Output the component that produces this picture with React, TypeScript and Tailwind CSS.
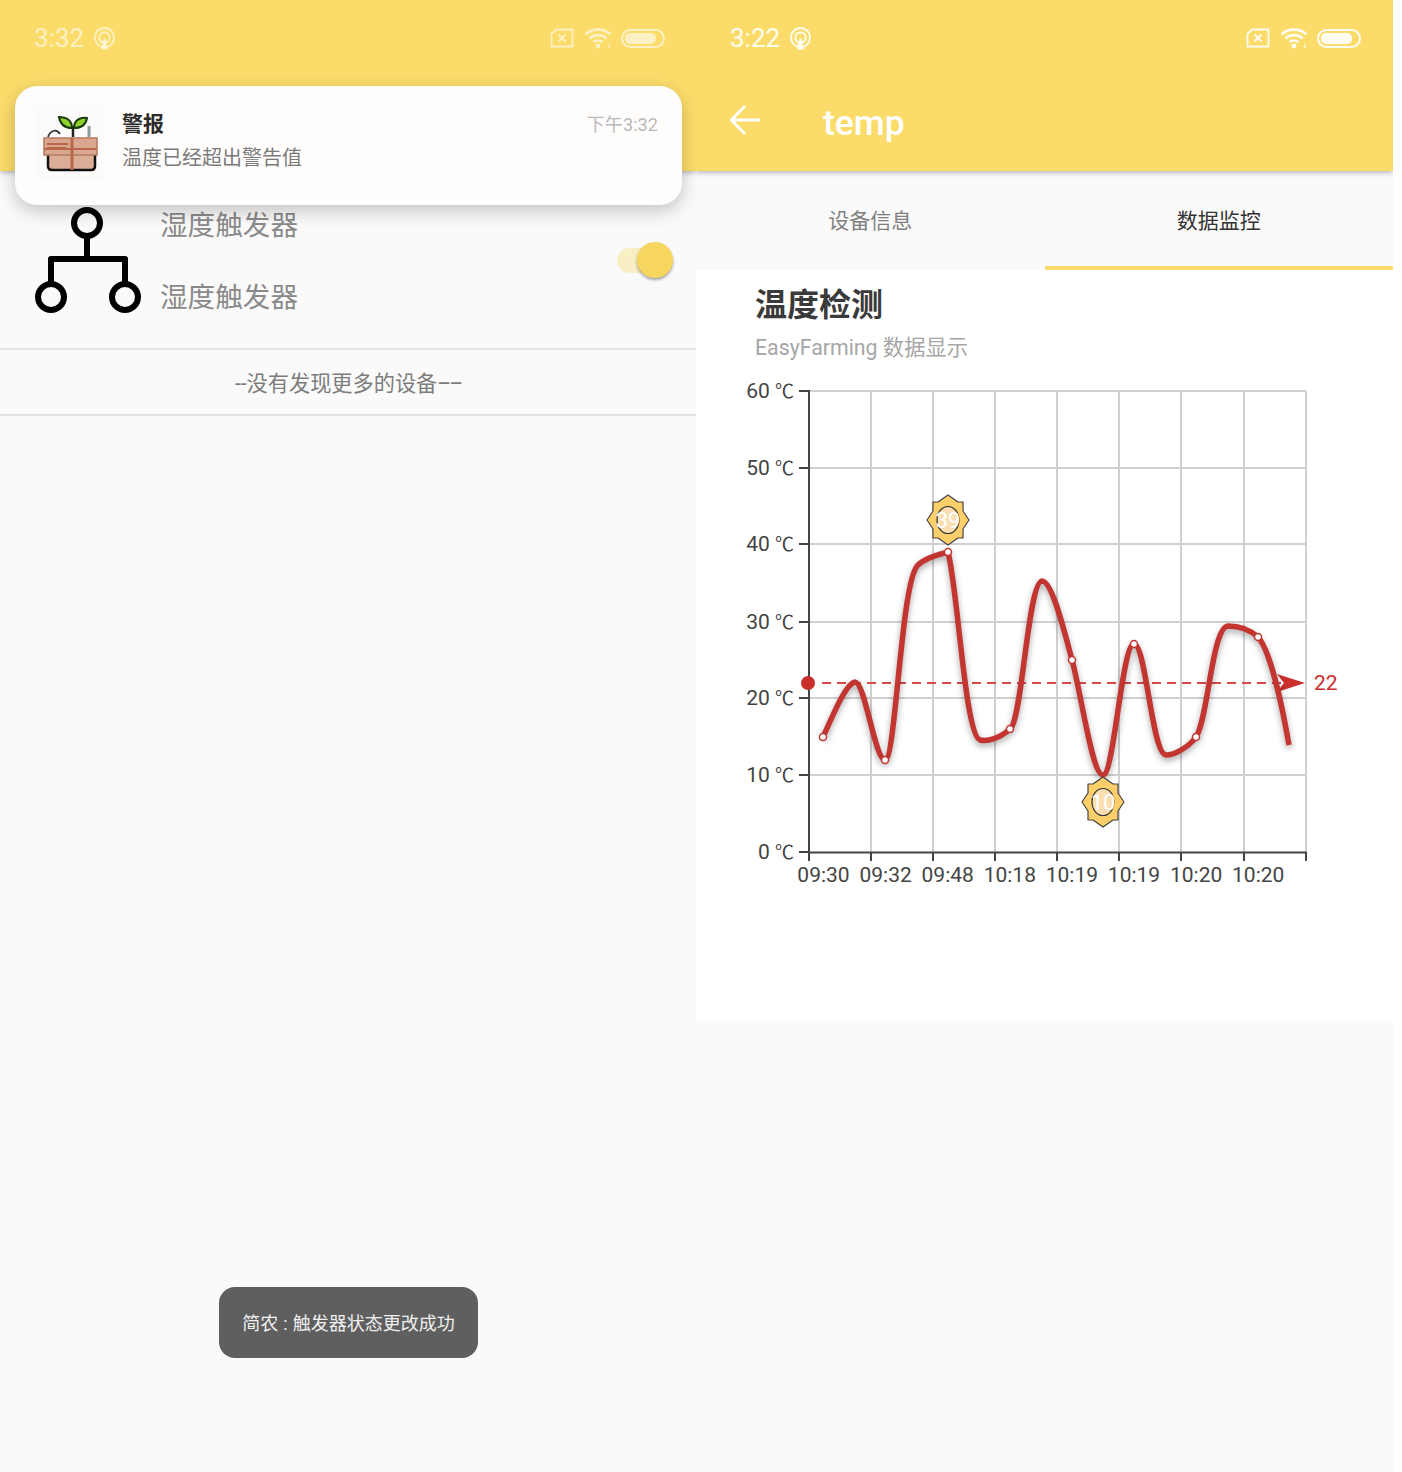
import React from "react";

const FONT = { fontFamily: 'Roboto, "Noto Sans CJK SC", sans-serif' };

function Hotspot({ className = "" }: { className?: string }) {
  return (
    <svg viewBox="0 0 24 24" className={className} fill="none" stroke="currentColor">
      <circle cx="12" cy="11" r="10" strokeWidth="2" />
      <circle cx="12" cy="11" r="5.5" strokeWidth="2" />
      <path d="M8.5 23.5 L11 12 H13 L15.5 23.5 Z" fill="currentColor" stroke="none" />
    </svg>
  );
}

function StatusIcons({ className = "" }: { className?: string }) {
  return (
    <div className={`flex items-center ${className}`}>
      <svg viewBox="0 0 24 20" className="h-[20px] w-[24px]" fill="none" stroke="currentColor" strokeWidth="1.8">
        <path d="M6 1.5 H22.5 V18.5 H1.5 V6 Z" strokeLinejoin="round" />
        <path d="M8.5 6.5 L15.5 13.5 M15.5 6.5 L8.5 13.5" strokeWidth="2" />
      </svg>
      <svg viewBox="0 0 28 22" className="ml-[10px] h-[22px] w-[28px]" fill="none" stroke="currentColor" strokeWidth="2.6">
        <path d="M1.5 7.5 C8 1 20 1 26.5 7.5" />
        <path d="M5.5 11.5 C10 7 18 7 22.5 11.5" />
        <path d="M9.5 15 C12 13 16 13 18.5 15" />
        <circle cx="14" cy="19" r="2.4" fill="currentColor" stroke="none" />
        <path d="M25 17 V21" strokeWidth="1.2" />
      </svg>
      <div className="ml-[9px] flex h-[19px] w-[44px] items-center rounded-full border-2 border-current p-[2px]">
        <div className="h-[11px] w-[31px] rounded-[5px] bg-current" />
      </div>
    </div>
  );
}

function AppIcon() {
  return (
    <svg viewBox="0 0 70 74" className="h-[74px] w-[70px] shrink-0 bg-[#fdfbf9]">
      <path d="M12 41 V60 Q12 64 16 64 H55 Q59 64 59 60 V41 Z" fill="#dcae98" stroke="#111" strokeWidth="2.5" />
      <path d="M8 32 H61 V49 H8 Z" fill="#d9a78f" stroke="#b57a5e" strokeWidth="1.5" />
      <path d="M11 38 H32 M11 42 H30" stroke="#b8674a" strokeWidth="2" />
      <path d="M36 32 V64" stroke="#b8674a" strokeWidth="3" />
      <path d="M8 43 H61" stroke="#b8674a" strokeWidth="2" />
      <path d="M37 31 V20" stroke="#222" strokeWidth="2.5" />
      <path d="M36 22 C28 22 24 17 23 11 C30 11 36 14 36 22 Z" fill="#8fd12a" stroke="#1a3b10" strokeWidth="2" />
      <path d="M38 22 C38 14 44 11 51 12 C50 18 46 22 38 22 Z" fill="#8fd12a" stroke="#1a3b10" strokeWidth="2" />
      <path d="M12 31 C14 25 20 22 24 28" stroke="#333" strokeWidth="1.8" fill="none" />
      <path d="M53 31 V20" stroke="#8d9aa0" strokeWidth="3" />
    </svg>
  );
}

function Sun({ cx, cy, label }: { cx: number; cy: number; label: string }) {
  const pts = [
    [0, -25], [10, -18], [15, -18], [15, -9], [21, 0], [15, 9], [15, 18], [10, 18],
    [0, 25], [-10, 18], [-15, 18], [-15, 9], [-21, 0], [-15, -9], [-15, -18], [-10, -18],
  ].map(([x, y]) => `${cx + x},${cy + y}`).join(" ");
  return (
    <g>
      <polygon points={pts} fill="#fdcf6b" stroke="#444" strokeWidth="1.2" strokeLinejoin="round" />
      <ellipse cx={cx} cy={cy} rx="11" ry="13.5" fill="#fbdfb3" stroke="#333" strokeWidth="1.2" />
      <text x={cx} y={cy + 8} textAnchor="middle" fontSize="22" fill="#fff">{label}</text>
    </g>
  );
}

function Chart() {
  const xs = [809, 871, 933, 995, 1057, 1119, 1181, 1244, 1306];
  const ys = [391, 468, 544, 622, 698, 775, 852];
  const yLabels = ["60", "50", "40", "30", "20", "10", "0"];
  const xLabels = ["09:30", "09:32", "09:48", "10:18", "10:19", "10:19", "10:20", "10:20"];
  const dots: [number, number][] = [
    [823, 737], [885, 760], [948, 552], [1010, 729], [1072, 660], [1134, 644], [1196, 737], [1258, 637],
  ];
  const curve =
    "M823,737 C832,718 845,684 855,682 C865,682 875,760 885,760 C896,760 901,580 918,565 C925,558 938,555 948,552 C958,590 965,735 980,740 C988,742 1000,738 1010,729 C1022,722 1028,582 1042,581 C1052,581 1064,630 1072,660 C1082,697 1092,775 1103,775 C1114,775 1122,644 1134,644 C1146,644 1152,755 1166,755 C1174,755 1188,748 1196,737 C1208,720 1212,627 1228,626 C1240,626 1250,630 1258,637 C1270,650 1282,705 1289,745";
  return (
    <svg viewBox="696 364 697 536" className="block h-[536px] w-[697px]" style={FONT}>
      {xs.slice(1).map((x) => (
        <line key={x} x1={x} x2={x} y1={391} y2={852} stroke="#d0d0d0" strokeWidth="2" />
      ))}
      {ys.slice(0, -1).map((y) => (
        <line key={y} x1={809} x2={1306} y1={y} y2={y} stroke="#d0d0d0" strokeWidth="2" />
      ))}
      <line x1={809} x2={809} y1={390} y2={853} stroke="#444" strokeWidth="2" />
      <line x1={808} x2={1307} y1={852.5} y2={852.5} stroke="#444" strokeWidth="2" />
      {ys.map((y, i) => (
        <g key={y}>
          <line x1={799} x2={809} y1={y} y2={y} stroke="#444" strokeWidth="2" />
          <text x={793} y={y + 7} textAnchor="end" fontSize="21" fill="#444">
            {yLabels[i]} <tspan fontSize="19" letterSpacing="-1">℃</tspan>
          </text>
        </g>
      ))}
      {xs.map((x) => (
        <line key={x} x1={x} x2={x} y1={852} y2={861} stroke="#444" strokeWidth="2" />
      ))}
      {xLabels.map((l, i) => (
        <text key={i} x={823.5 + i * 62.1} y={882} textAnchor="middle" fontSize="21" fill="#444">{l}</text>
      ))}
      <line x1={822} x2={1285} y1={683} y2={683} stroke="#d9494a" strokeWidth="2" strokeDasharray="9 6" />
      <polygon points="1277,674 1305,683 1277,692 1284,683" fill="#c9302c" />
      <path d={curve} fill="none" stroke="#c23531" strokeWidth="5.5" strokeLinejoin="round" className="drop-shadow-[0_3px_3px_rgba(0,0,0,0.35)]" />
      {dots.map(([x, y]) => (
        <circle key={x} cx={x} cy={y} r="3.5" fill="#fff" stroke="#c23531" strokeWidth="1.5" />
      ))}
      <circle cx={808} cy={683} r="7" fill="#c9302c" />
      <text x={1314} y={690} fontSize="21" fill="#c9302c">22</text>
      <Sun cx={948} cy={520} label="39" />
      <Sun cx={1103} cy={802} label="10" />
    </svg>
  );
}

function LeftPanel() {
  return (
    <div className="relative flex w-[696px] flex-col bg-[#fafafa]">
      <div className="h-[171px] bg-[#fbdc6b] shadow-[0_2px_5px_rgba(0,0,0,0.25)] [clip-path:inset(0_0_-10px_0)]">
        <div className="flex h-[76px] items-center pl-[34px] pr-[31px] text-white/60">
          <span className="text-[26px] leading-none">3:32</span>
          <Hotspot className="ml-[9px] h-[23px] w-[23px]" />
          <StatusIcons className="ml-auto" />
        </div>
      </div>

      <div className="flex h-[179px] items-start border-b-2 border-[#e2e2e2]">
        <svg viewBox="0 0 110 110" className="ml-[33px] mt-[34px] h-[110px] w-[110px] shrink-0" fill="none" stroke="#000" strokeWidth="6">
          <circle cx="54" cy="18" r="13" />
          <path d="M54 31 V54 M18 81 V54 H92 V81" strokeLinejoin="round" />
          <circle cx="18" cy="92" r="13" />
          <circle cx="92" cy="92" r="13" />
        </svg>
        <div className="ml-[17px] mt-[35px] flex flex-col gap-[32px] text-[27.6px] leading-[40px] text-[#8a8a8a]">
          <span>湿度触发器</span>
          <span>湿度触发器</span>
        </div>
        <div className="relative ml-auto mr-[23px] mt-[71px] h-[36px] w-[56px]">
          <div className="absolute left-0 top-[6px] h-[25px] w-[40px] rounded-full bg-[#f8efc4]" />
          <div className="absolute right-0 top-0 h-[36px] w-[36px] rounded-full bg-[#f6d65f] shadow-[0_2px_3px_rgba(0,0,0,0.35)]" />
        </div>
      </div>

      <div className="flex h-[66px] items-center justify-center border-b-2 border-[#e2e2e2] pt-[3px] text-[21.2px] text-[#7d7d7d]">
        --没有发现更多的设备<span className="tracking-[-2px]">––</span>
      </div>

      <div className="absolute left-[15px] top-[86px] flex h-[119px] w-[667px] rounded-[22px] bg-[#fffdfc] pl-[21px] pr-[24px] pt-[20px] shadow-[0_6px_18px_rgba(0,0,0,0.22)]">
        <AppIcon />
        <div className="ml-[16px] flex flex-col">
          <span className="text-[21px] font-bold leading-[36px] text-[#2b2b2b]">警报</span>
          <span className="mt-[1px] text-[20px] leading-[30px] text-[#7a7a7a]">温度已经超出警告值</span>
        </div>
        <span className="ml-auto text-[18.2px] leading-[38px] text-[#b9b9b9]">下午3:32</span>
      </div>

      <div className="absolute left-[219px] top-[1287px] flex h-[71px] w-[259px] items-center justify-center rounded-[16px] bg-[#5f5f5f] pt-[2px] text-[18px] text-[#f0f0f0]">
        简农<span className="mx-[5px]">:</span>触发器状态更改成功
      </div>
    </div>
  );
}

function RightPanel() {
  return (
    <div className="flex w-[697px] flex-col bg-[#fafafa]">
      <div className="relative z-10 h-[171px] bg-[#fbdc6b] shadow-[0_2px_5px_rgba(0,0,0,0.25)] [clip-path:inset(0_0_-10px_0)]">
        <div className="flex h-[76px] items-center pl-[34px] pr-[32px] text-white/90">
          <span className="text-[26px] leading-none">3:22</span>
          <Hotspot className="ml-[9px] h-[23px] w-[23px]" />
          <StatusIcons className="ml-auto" />
        </div>
        <div className="flex h-[95px] items-center pl-[33px] text-white">
          <svg viewBox="0 0 32 32" className="mb-[8px] h-[32px] w-[32px]" fill="none" stroke="currentColor" strokeWidth="3">
            <path d="M31 16 H3 M16 2 L2.5 16 L16 30" />
          </svg>
          <span className="ml-[62px] text-[35.5px] font-medium leading-none">temp</span>
        </div>
      </div>
      <div className="flex h-[99px]">
        <div className="flex flex-1 items-center justify-center pt-[2px] text-[21px] text-[#7f7f7f]">设备信息</div>
        <div className="flex flex-1 items-center justify-center border-b-4 border-[#fbdc6b] pt-[6px] text-[21px] text-[#333]">数据监控</div>
      </div>
      <div className="h-[751px] bg-white">
        <div className="pl-[59px] pt-[13px]">
          <div className="text-[32px] font-bold leading-[44px] text-[#3a3a3a]">温度检测</div>
          <div className="mt-[5px] text-[21.3px] leading-[32px] text-[#a6a6a6]">EasyFarming 数据显示</div>
        </div>
        <Chart />
      </div>
    </div>
  );
}

export default function App() {
  return (
    <div className="flex h-[1472px] w-[1402px] overflow-hidden bg-white" style={FONT}>
      <LeftPanel />
      <RightPanel />
    </div>
  );
}
